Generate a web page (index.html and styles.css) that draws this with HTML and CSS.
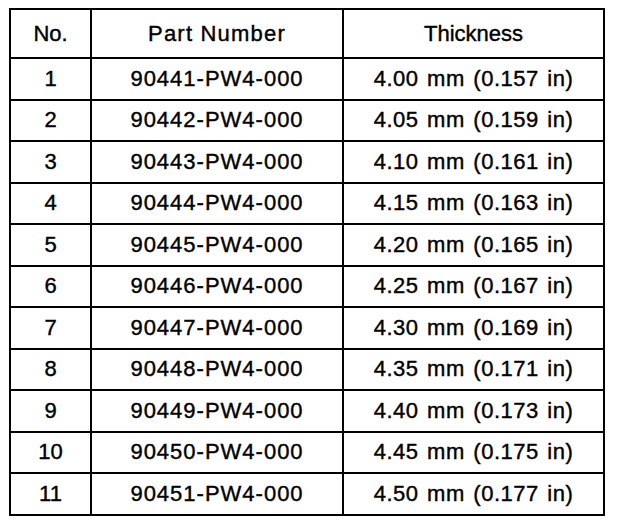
FILE: index.html
```html
<!DOCTYPE html>
<html lang="en">
<head>
  <meta charset="UTF-8" />
  <title>Shim Thickness Chart</title>
  <link rel="stylesheet" href="styles.css">
</head>
<body>

  <!-- Shim selection chart -->
  <table class="chart">
    <colgroup>
      <col class="col-no" />
      <col class="col-part" />
      <col class="col-thick" />
    </colgroup>
    <thead>
      <tr>
        <th>No.</th>
        <th class="part">Part Number</th>
        <th>Thickness</th>
      </tr>
    </thead>
    <tbody>
      <tr><td>1</td><td class="part">90441-PW4-000</td><td class="thick">4.00 mm (0.157 in)</td></tr>
      <tr><td>2</td><td class="part">90442-PW4-000</td><td class="thick">4.05 mm (0.159 in)</td></tr>
      <tr><td>3</td><td class="part">90443-PW4-000</td><td class="thick">4.10 mm (0.161 in)</td></tr>
      <tr><td>4</td><td class="part">90444-PW4-000</td><td class="thick">4.15 mm (0.163 in)</td></tr>
      <tr><td>5</td><td class="part">90445-PW4-000</td><td class="thick">4.20 mm (0.165 in)</td></tr>
      <tr><td>6</td><td class="part">90446-PW4-000</td><td class="thick">4.25 mm (0.167 in)</td></tr>
      <tr><td>7</td><td class="part">90447-PW4-000</td><td class="thick">4.30 mm (0.169 in)</td></tr>
      <tr><td>8</td><td class="part">90448-PW4-000</td><td class="thick">4.35 mm (0.171 in)</td></tr>
      <tr><td>9</td><td class="part">90449-PW4-000</td><td class="thick">4.40 mm (0.173 in)</td></tr>
      <tr><td>10</td><td class="part">90450-PW4-000</td><td class="thick">4.45 mm (0.175 in)</td></tr>
      <tr><td>11</td><td class="part">90451-PW4-000</td><td class="thick">4.50 mm (0.177 in)</td></tr>
    </tbody>
  </table>

</body>
</html>
```

FILE: styles.css
```css
/* General styling */
body {
  font-family: 'Liberation Sans', Arial, sans-serif;
  margin: 0;
  padding: 8px 0 0 9px;
  background: #fff;
  color: #000;
}

/* Chart table */
.chart {
  border-collapse: collapse;
  table-layout: fixed;
  width: 594px;
  font-size: 22px;
  -webkit-text-stroke: 0.4px #000;
}

.col-no {
  width: 81px;
}

.col-part {
  width: 252px;
}

.col-thick {
  width: 261px;
}

.chart th,
.chart td {
  border: 2px solid #000;
  padding: 0;
  text-align: center;
  font-weight: normal;
  white-space: nowrap;
}

.chart thead tr {
  height: 49px;
}

.chart tbody tr {
  height: 41.5px;
}

.chart th.part {
  letter-spacing: 1.2px;
}

.chart td.part {
  letter-spacing: 1px;
}

.chart td.thick {
  letter-spacing: 0.5px;
  word-spacing: 2px;
}
```
